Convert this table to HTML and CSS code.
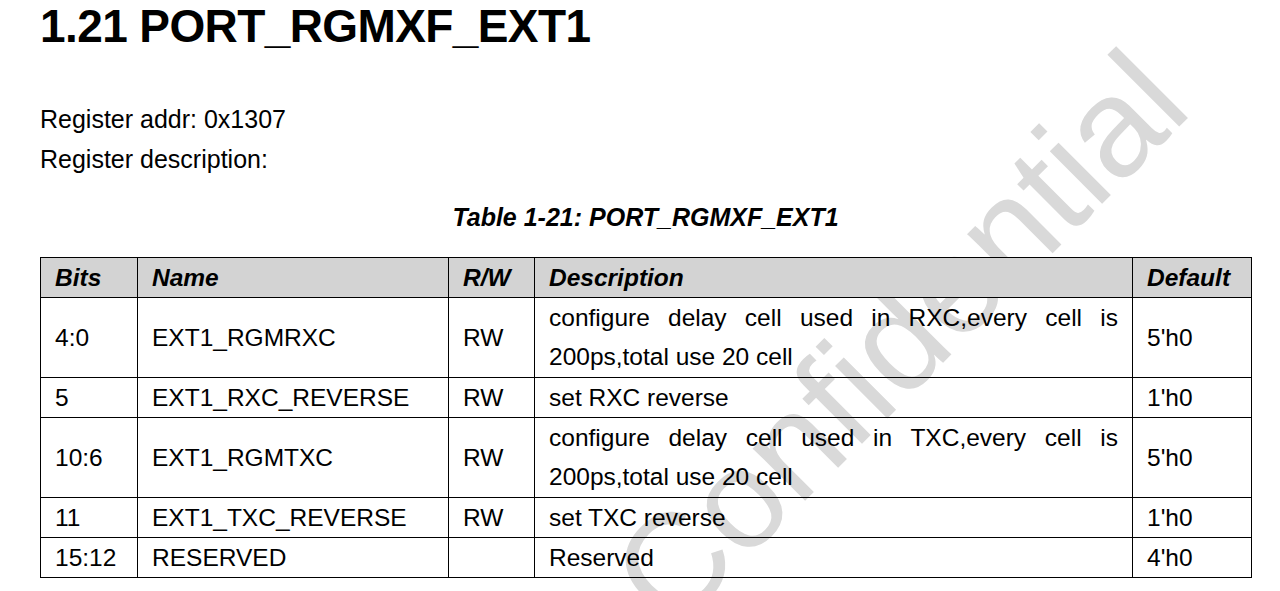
FILE: index.html
```html
<!DOCTYPE html>
<html lang="en">
<head>
<meta charset="utf-8">
<title>PORT_RGMXF_EXT1</title>
<link rel="stylesheet" href="styles.css">
</head>
<body>
<div class="page">
  <div class="watermark">Confidential</div>
  <h1 class="title">1.21 PORT_RGMXF_EXT1</h1>
  <p class="meta first">Register addr: 0x1307</p>
  <p class="meta">Register description:</p>
  <p class="caption">Table 1-21: PORT_RGMXF_EXT1</p>
  <table class="reg">
    <colgroup>
      <col class="c-bits"><col class="c-name"><col class="c-rw"><col class="c-desc"><col class="c-def">
    </colgroup>
    <thead>
      <tr><th>Bits</th><th>Name</th><th>R/W</th><th>Description</th><th>Default</th></tr>
    </thead>
    <tbody>
      <tr><td>4:0</td><td>EXT1_RGMRXC</td><td>RW</td><td class="desc multi">configure delay cell used in RXC,every cell is 200ps,total use 20 cell</td><td>5'h0</td></tr>
      <tr><td>5</td><td>EXT1_RXC_REVERSE</td><td>RW</td><td class="desc">set RXC reverse</td><td>1'h0</td></tr>
      <tr><td>10:6</td><td>EXT1_RGMTXC</td><td>RW</td><td class="desc multi">configure delay cell used in TXC,every cell is 200ps,total use 20 cell</td><td>5'h0</td></tr>
      <tr><td>11</td><td>EXT1_TXC_REVERSE</td><td>RW</td><td class="desc">set TXC reverse</td><td>1'h0</td></tr>
      <tr><td>15:12</td><td>RESERVED</td><td></td><td class="desc">Reserved</td><td>4'h0</td></tr>
    </tbody>
  </table>
</div>
</body>
</html>
```
FILE: styles.css
```css
html, body {
  margin: 0;
  padding: 0;
  background: #ffffff;
}
body {
  font-family: "Liberation Sans", Arial, sans-serif;
  color: #000000;
  overflow: hidden;
}
.page {
  position: relative;
  padding: 0 0 0 40px;
  height: 591px;
  overflow: hidden;
}
.watermark {
  position: absolute;
  left: 672px;
  top: 516px;
  font-size: 140px;
  line-height: 1;
  color: #d9d9d9;
  transform: rotate(-45deg);
  transform-origin: 0 118.5px;
  white-space: nowrap;
  z-index: 0;
}
.title {
  position: relative;
  margin: 0;
  font-size: 46px;
  font-weight: bold;
  line-height: 53px;
  letter-spacing: -0.6px;
}
.meta {
  position: relative;
  margin: 0;
  font-size: 25px;
  line-height: 40px;
}
.meta.first {
  margin-top: 46px;
}
.caption {
  position: relative;
  margin: 20px 0 0 0;
  width: 1211px;
  text-align: center;
  font-size: 25px;
  font-weight: bold;
  font-style: italic;
  line-height: 36px;
}
.reg {
  position: relative;
  z-index: 1;
  margin-top: 22px;
  border-collapse: collapse;
  table-layout: fixed;
  width: 1211px;
  font-size: 24.5px;
}
.c-bits { width: 97px; }
.c-name { width: 311px; }
.c-rw { width: 86px; }
.c-desc { width: 598px; }
.c-def { width: 119px; }
.reg th, .reg td {
  border: 1px solid #000000;
  padding: 1px 14px 0 14px;
  line-height: 38px;
  text-align: left;
  vertical-align: middle;
}
.reg th {
  background: #d3d3d3;
  font-weight: bold;
  font-style: italic;
}
.reg td.desc {
  text-align: justify;
}
.reg td.multi {
  line-height: 39px;
  padding-top: 0;
  padding-bottom: 1px;
}
```
